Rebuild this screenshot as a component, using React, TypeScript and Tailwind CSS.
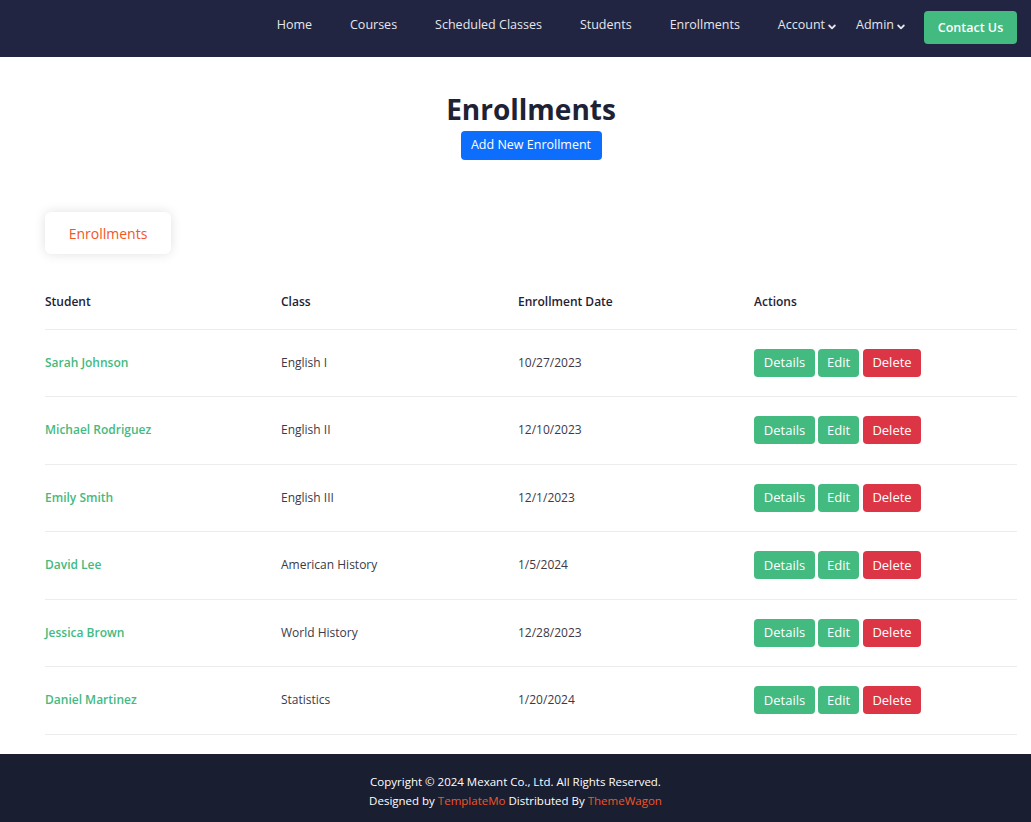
import React from "react";

const rows = [
  { s: "Sarah Johnson", c: "English I", d: "10/27/2023" },
  { s: "Michael Rodriguez", c: "English II", d: "12/10/2023" },
  { s: "Emily Smith", c: "English III", d: "12/1/2023" },
  { s: "David Lee", c: "American History", d: "1/5/2024" },
  { s: "Jessica Brown", c: "World History", d: "12/28/2023" },
  { s: "Daniel Martinez", c: "Statistics", d: "1/20/2024" },
];

function Chevron() {
  return (
    <svg width="8" height="6" viewBox="0 0 8 6" className="ml-[3px] mt-[3px]">
      <path d="M1.2 1.5 L4 4.3 L6.8 1.5" stroke="currentColor" strokeWidth="1.8" fill="none" strokeLinecap="round" strokeLinejoin="round" />
    </svg>
  );
}

export default function App() {
  const font = { fontFamily: '"Open Sans", "Liberation Sans", sans-serif' };
  return (
    <div style={font} className="w-[1031px] h-[822px] bg-white flex flex-col overflow-hidden">
      <header className="h-[57px] shrink-0 bg-[#212541] flex justify-end pr-[14px]">
        <nav className="flex items-start text-[12.5px] font-medium text-[#e6e6ec] leading-[16px]">
          <span className="mt-[17px]">Home</span>
          <span className="mt-[17px] ml-[38px]">Courses</span>
          <span className="mt-[17px] ml-[38px]">Scheduled Classes</span>
          <span className="mt-[17px] ml-[38px]">Students</span>
          <span className="mt-[17px] ml-[38px]">Enrollments</span>
          <span className="mt-[17px] ml-[38px] flex items-center">Account<Chevron /></span>
          <span className="mt-[17px] ml-[20px] flex items-center">Admin<Chevron /></span>
          <span className="mt-[11px] ml-[19px] h-[33px] w-[93px] rounded-[4px] bg-[#43ba7f] text-white font-semibold text-[12.5px] flex items-center justify-center">Contact Us</span>
        </nav>
      </header>

      <main className="pl-[45px] pr-[14px]">
        <div className="flex flex-col items-center pt-[34px]">
          <h1 className="text-[28px] leading-[36px] font-bold text-[#1e2235]">Enrollments</h1>
          <button className="mt-[4px] h-[29px] w-[141px] rounded-[4px] bg-[#0d6efd] text-white text-[12.5px]">Add New Enrollment</button>
        </div>

        <div className="mt-[52px] w-[126px] h-[42px] rounded-[6px] bg-white shadow-[0_0_12px_rgba(0,0,0,0.12)] flex items-center justify-center text-[14px] font-medium text-[#f35525]">
          Enrollments
        </div>

        <table className="mt-[21px] w-full text-[12px] border-collapse">
          <thead>
            <tr className="border-b border-[#ececec] h-[54px] text-left">
              <th className="font-semibold text-[#1e2235] w-[236px]">Student</th>
              <th className="font-semibold text-[#1e2235] w-[237px]">Class</th>
              <th className="font-semibold text-[#1e2235] w-[236px]">Enrollment Date</th>
              <th className="font-semibold text-[#1e2235]">Actions</th>
            </tr>
          </thead>
          <tbody>
            {rows.map((r) => (
              <tr key={r.s} className="border-b border-[#ececec] h-[67.5px]">
                <td className="font-semibold text-[#43ba7f]">{r.s}</td>
                <td className="text-[#3a3a48]">{r.c}</td>
                <td className="text-[#3a3a48]">{r.d}</td>
                <td>
                  <div className="flex gap-[3px] text-[13px] text-white">
                    <span className="w-[61px] h-[28px] rounded-[4px] bg-[#43ba7f] flex items-center justify-center">Details</span>
                    <span className="w-[41px] h-[28px] rounded-[4px] bg-[#43ba7f] flex items-center justify-center">Edit</span>
                    <span className="ml-[1px] w-[58px] h-[28px] rounded-[4px] bg-[#dc3545] flex items-center justify-center">Delete</span>
                  </div>
                </td>
              </tr>
            ))}
          </tbody>
        </table>
      </main>

      <footer className="mt-[19px] h-[68px] shrink-0 bg-[#1a1e31] flex flex-col items-center justify-center pt-[7px] text-[11.5px] text-white leading-[19px]">
        <p>Copyright © 2024 Mexant Co., Ltd. All Rights Reserved.</p>
        <p>Designed by <span className="text-[#f35525]">TemplateMo</span> Distributed By <span className="text-[#f35525]">ThemeWagon</span></p>
      </footer>
    </div>
  );
}
